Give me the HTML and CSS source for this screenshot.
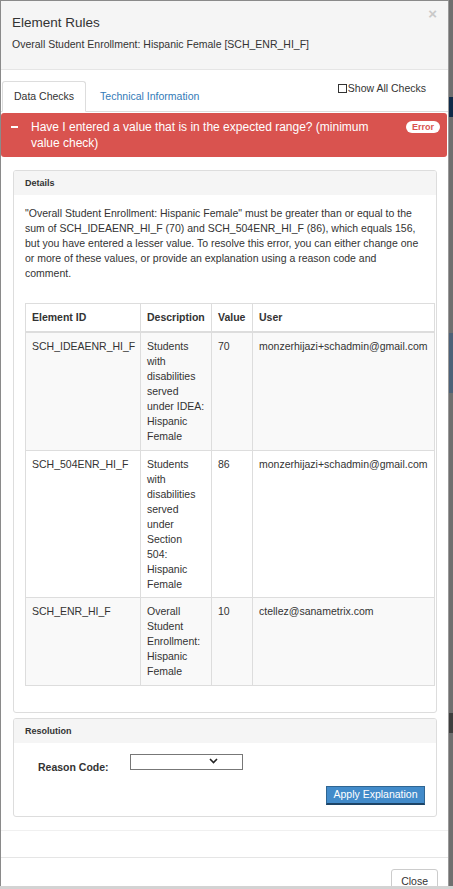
FILE: index.html
```html
<!DOCTYPE html>
<html>
<head>
<meta charset="utf-8">
<title>Element Rules</title>
<link rel="stylesheet" href="styles.css">
</head>
<body>
<div class="modal">
  <div class="modal-header">
    <span class="close-x">&times;</span>
    <h4 class="modal-title">Element Rules</h4>
    <div class="modal-subtitle">Overall Student Enrollment: Hispanic Female [SCH_ENR_HI_F]</div>
  </div>
  <div class="modal-body">
    <div class="tabs">
      <div class="tab active">Data Checks</div>
      <div class="tab link">Technical Information</div>
      <label class="show-all"><span class="cb"></span>Show All Checks</label>
    </div>
    <div class="alert">
      <span class="minus"></span>
      <div class="alert-text">Have I entered a value that is in the expected range? (minimum value check)</div>
      <span class="badge">Error</span>
    </div>
    <div class="panel details">
      <div class="panel-heading">Details</div>
      <div class="panel-body">
        <p class="desc">"Overall Student Enrollment: Hispanic Female" must be greater than or equal to the sum of SCH_IDEAENR_HI_F (70) and SCH_504ENR_HI_F (86), which equals 156, but you have entered a lesser value. To resolve this error, you can either change one or more of these values, or provide an explanation using a reason code and comment.</p>
        <table class="grid">
          <colgroup>
            <col class="c1"><col class="c2"><col class="c3"><col class="c4">
          </colgroup>
          <thead>
            <tr><th>Element ID</th><th>Description</th><th>Value</th><th>User</th></tr>
          </thead>
          <tbody>
            <tr class="odd"><td>SCH_IDEAENR_HI_F</td><td>Students with disabilities served under IDEA: Hispanic Female</td><td>70</td><td>monzerhijazi+schadmin@gmail.com</td></tr>
            <tr><td>SCH_504ENR_HI_F</td><td>Students with disabilities served under Section 504: Hispanic Female</td><td>86</td><td>monzerhijazi+schadmin@gmail.com</td></tr>
            <tr class="odd"><td>SCH_ENR_HI_F</td><td>Overall Student Enrollment: Hispanic Female</td><td>10</td><td>ctellez@sanametrix.com</td></tr>
          </tbody>
        </table>
      </div>
    </div>
    <div class="panel resolution">
      <div class="panel-heading">Resolution</div>
      <div class="panel-body res-body">
        <div class="form-row">
          <label class="res-label">Reason Code:</label>
          <div class="select"><svg class="chev" width="9" height="6" viewBox="0 0 9 6"><path d="M1 1 L4.5 4.5 L8 1" fill="none" stroke="#222" stroke-width="1.6"/></svg></div>
        </div>
        <div class="btn-row"><button class="btn-primary">Apply Explanation</button></div>
      </div>
    </div>
    <div class="body-end"></div>
  </div>
  <div class="modal-footer">
    <button class="btn-default">Close</button>
  </div>
</div>
<div class="bottom-strip"></div>
</body>
</html>
```

FILE: styles.css
```css
* { box-sizing: border-box; }

html, body {
  margin: 0;
  padding: 0;
}

body {
  width: 453px;
  height: 889px;
  overflow: hidden;
  font-family: "Liberation Sans", Arial, sans-serif;
  font-size: 10.5px;
  line-height: 15px;
  color: #333;
  background: linear-gradient(to bottom,
    #6f6f6f 0, #6f6f6f 97px,
    #0e2a48 97px, #0e2a48 117px,
    #6f6f6f 117px, #6f6f6f 333px,
    #4d6178 333px, #4d6178 393px,
    #6f6f6f 393px, #6f6f6f 713px,
    #3e3e3e 713px, #3e3e3e 733px,
    #6f6f6f 733px);
}

.modal {
  width: 449px;
  height: 889px;
  background: #fff;
  border-left: 1px solid #8a8a8a;
  border-top: 1px solid #8a8a8a;
  border-right: 1px solid #9a9a9a;
}

.modal-header {
  position: relative;
  background: #f5f5f5;
  border-bottom: 1px solid #e5e5e5;
  padding: 12px 11px 17px;
}

.close-x {
  position: absolute;
  top: 5px;
  right: 11px;
  font-size: 15px;
  line-height: 15px;
  font-weight: bold;
  color: #c9c9c9;
}

.modal-title {
  margin: 0;
  font-size: 13.5px;
  line-height: 19px;
  font-weight: normal;
  color: #333;
}

.modal-subtitle {
  margin-top: 5px;
  font-size: 10.5px;
  line-height: 15px;
}

.tabs {
  display: flex;
  align-items: flex-start;
  margin-top: 11px;
  padding-left: 1px;
  border-bottom: 1px solid #ddd;
}

.tab {
  padding: 7px 11px 7px;
  border: 1px solid transparent;
  border-radius: 3px 3px 0 0;
  margin-bottom: -1px;
}

.tab.active {
  background: #fff;
  border-color: #ddd #ddd transparent #ddd;
}

.tab.link {
  margin-left: 2px;
  color: #337ab7;
}

.show-all {
  margin-left: auto;
  margin-right: 22px;
  display: flex;
  align-items: center;
  color: #333;
}

.cb {
  display: inline-block;
  width: 9px;
  height: 9px;
  border: 1px solid #333;
  background: #fff;
  margin-right: 1px;
}

.alert {
  display: flex;
  align-items: flex-start;
  margin: 1px 1px 0 0;
  padding: 6px 7px 6px 10px;
  background: #d9534f;
  border-radius: 3px;
  color: #fff;
  font-size: 12px;
  line-height: 16px;
}

.minus {
  flex: none;
  width: 7px;
  height: 2px;
  background: #fff;
  margin-top: 7px;
  margin-right: 13px;
}

.alert-text {
  flex: 1;
}

.badge {
  flex: none;
  margin-top: 2px;
  margin-left: 8px;
  padding: 0 6px;
  height: 12px;
  line-height: 12px;
  border-radius: 6px;
  background: #fff;
  color: #d9534f;
  font-size: 9px;
  font-weight: bold;
}

.panel {
  margin: 13px 11px 0 12px;
  border: 1px solid #ddd;
  border-radius: 3px;
  background: #fff;
  overflow: hidden;
}

.panel.resolution {
  margin-top: 5px;
}

.panel-heading {
  height: 24px;
  line-height: 24px;
  padding: 0 11px;
  background: #f5f5f5;
  font-size: 9px;
  font-weight: bold;
  color: #333;
}

.panel-body {
  padding: 11px 2px 11px 11px;
}

.desc {
  margin: 0 9px 22px 0;
}

.grid {
  width: 409px;
  table-layout: fixed;
  border-collapse: collapse;
  margin-bottom: 15px;
}

.c1 { width: 115px; }
.c2 { width: 71px; }
.c3 { width: 41px; }
.c4 { width: 182px; }

.grid th,
.grid td {
  border: 1px solid #ddd;
  padding: 6px 6px 5.5px;
  text-align: left;
  vertical-align: top;
  line-height: 15px;
}

.grid th {
  font-weight: bold;
  padding-bottom: 6px;
  border-bottom: 2px solid #ddd;
}

.grid tr.odd td {
  background: #f9f9f9;
}

.res-body {
  padding: 11px 11px 11px 11px;
}

.form-row {
  display: flex;
  align-items: flex-start;
}

.res-label {
  width: 105px;
  padding-left: 13px;
  padding-top: 6px;
  font-weight: bold;
}

.select {
  width: 113px;
  height: 16px;
  border: 1px solid #777;
  background: #fff;
  position: relative;
}

.chev {
  position: absolute;
  left: 78px;
  top: 3px;
}

.btn-row {
  display: flex;
  justify-content: flex-end;
  margin-top: 11px;
}

.btn-primary {
  width: 99px;
  height: 19px;
  padding: 0;
  font-family: "Liberation Sans", Arial, sans-serif;
  font-size: 10.5px;
  line-height: 15px;
  color: #fff;
  background: #428bca;
  border: 1px solid #2f6592;
  border-bottom: 2px solid #1d4466;
  border-radius: 0;
}

.body-end {
  margin-top: 13px;
  border-bottom: 1px solid #f0f0f0;
  height: 0;
}

.modal-footer {
  margin-top: 26px;
  border-top: 1px solid #e5e5e5;
  padding: 11px 10px;
  display: flex;
  justify-content: flex-end;
}

.btn-default {
  padding: 4px 9px;
  font-family: "Liberation Sans", Arial, sans-serif;
  font-size: 10.5px;
  line-height: 15px;
  color: #333;
  background: #fff;
  border: 1px solid #ccc;
  border-radius: 3px;
}

.bottom-strip {
  position: fixed;
  left: 0;
  bottom: 0;
  width: 100%;
  height: 3px;
  background: #d3d3d3;
}
```
